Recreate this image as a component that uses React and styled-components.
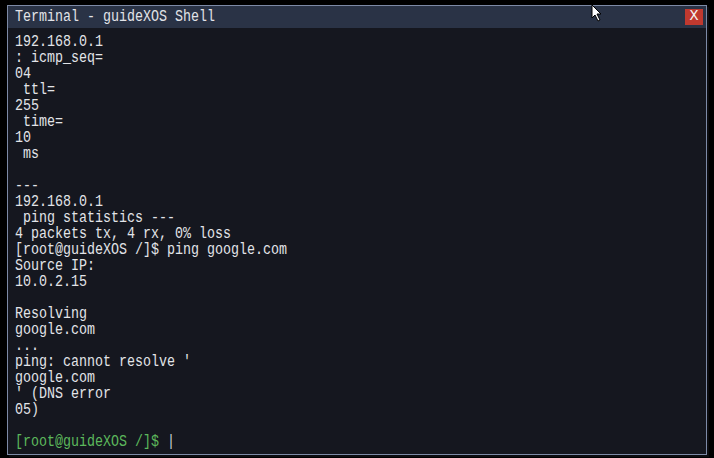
import React from "react";
import styled, { createGlobalStyle } from "styled-components";

const GlobalStyle = createGlobalStyle`
    html, body {
        margin: 0;
        padding: 0;
        background: #000;
        overflow: hidden;
    }
`;

const Screen = styled.div`
    position: relative;
    width: 714px;
    height: 458px;
    padding: 5px 0 0 7px;
    box-sizing: border-box;
    background: #000;
`;

const Window = styled.div`
    width: 700px;
    height: 450px;
    box-sizing: border-box;
    border: 1px solid #7d8aa6;
    background: #15171f;
    display: flex;
    flex-direction: column;
    box-shadow: 2px 2px 0 #0b0c10;
`;

const TitleBar = styled.div`
    height: 22px;
    flex: none;
    display: flex;
    align-items: center;
    justify-content: space-between;
    padding: 0 3px 0 7px;
    background: #2a3346;
`;

const MonoText = styled.div`
    font-family: "Liberation Mono", "DejaVu Sans Mono", monospace;
    font-size: 16px;
    line-height: 16px;
    height: 16px;
    white-space: pre;
    transform: scaleX(0.833);
    transform-origin: left top;
    color: ${({ $color }) => $color || "#e2e4e8"};
`;

const CloseButton = styled.div`
    width: 18px;
    height: 16px;
    background: #c0392f;
    color: #f4f4f4;
    display: flex;
    align-items: center;
    justify-content: center;
    font-family: "Liberation Mono", monospace;
    font-size: 15px;
    line-height: 16px;
`;

const Body = styled.div`
    flex: 1;
    padding: 6px 7px 0 7px;
    display: flex;
    flex-direction: column;
`;

const Pointer = styled.svg`
    position: absolute;
    left: 591px;
    top: 4px;
`;

const lines = [
    "192.168.0.1",
    ": icmp_seq=",
    "04",
    " ttl=",
    "255",
    " time=",
    "10",
    " ms",
    "",
    "---",
    "192.168.0.1",
    " ping statistics ---",
    "4 packets tx, 4 rx, 0% loss",
    "[root@guideXOS /]$ ping google.com",
    "Source IP:",
    "10.0.2.15",
    "",
    "Resolving",
    "google.com",
    "...",
    "ping: cannot resolve '",
    "google.com",
    "' (DNS error",
    "05)",
    "",
];

export default function App() {
    return (
        <>
            <GlobalStyle />
            <Screen>
                <Window>
                    <TitleBar>
                        <MonoText>Terminal - guideXOS Shell</MonoText>
                        <CloseButton>X</CloseButton>
                    </TitleBar>
                    <Body>
                        {lines.map((line, i) => (
                            <MonoText key={i}>{line || " "}</MonoText>
                        ))}
                        <MonoText $color="#5cb85c">
                            [root@guideXOS /]$ <span style={{ color: "#c9ccd3" }}>|</span>
                        </MonoText>
                    </Body>
                </Window>
                <Pointer width="12" height="18" viewBox="0 0 12 18">
                    <path d="M1 1 L1 14 L4 11 L7 17 L9 16 L6 10 L10 10 Z" fill="#fff" stroke="#000" strokeWidth="1" />
                </Pointer>
            </Screen>
        </>
    );
}
